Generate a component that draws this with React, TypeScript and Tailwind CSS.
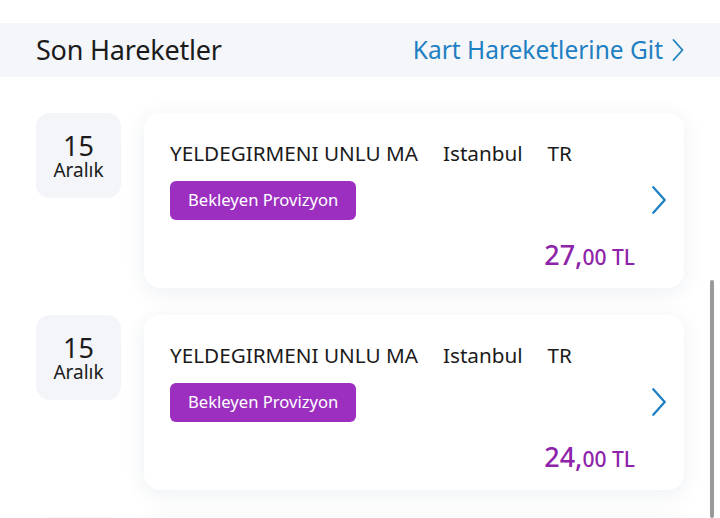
const TRANSACTIONS = [
  { day: "15", month: "Aralık", merchant: "YELDEGIRMENI UNLU MA", city: "Istanbul", country: "TR", whole: "27", cents: "00" },
  { day: "15", month: "Aralık", merchant: "YELDEGIRMENI UNLU MA", city: "Istanbul", country: "TR", whole: "24", cents: "00" },
  { day: "14", month: "Aralık", merchant: "YELDEGIRMENI UNLU MA", city: "Istanbul", country: "TR", whole: "18", cents: "50" },
];

const font = { fontFamily: '"Noto Sans", "Open Sans", sans-serif' };

// thin chevron used for links and row arrows
const Chevron = ({ className }: { className?: string }) => (
  <svg viewBox="0 0 12 22" fill="none" className={className}>
    <polyline points="1.5,1 10.5,11 1.5,21" stroke="currentColor" strokeWidth="1.8" strokeLinecap="round" strokeLinejoin="round" />
  </svg>
);

export default function App() {
  return (
    <div className="relative w-[720px] h-[518px] overflow-hidden bg-white text-[#1b1b1b]" style={font}>
      {/* Section header */}
      <div className="mt-[23px] h-[54px] bg-[#f4f6f9] flex items-center justify-between pl-[36px] pr-[36px]">
        <h2 className="text-[27px] tracking-[-0.2px]">Son Hareketler</h2>
        <button className="flex items-center gap-[9px] text-[24.5px] text-[#1e7fc2]">
          Kart Hareketlerine Git
          <Chevron className="w-[12px] h-[22px]" />
        </button>
      </div>

      {/* Transaction list */}
      <div className="flex flex-col gap-[27px] pt-[36px] pl-[36px] pr-[36px]">
        {TRANSACTIONS.map((t, i) => (
          <div key={i} className="flex gap-[23px] items-start">
            <div className="w-[85px] h-[85px] shrink-0 rounded-[14px] bg-[#f3f5f9] flex flex-col items-center justify-center pt-[5px]">
              <span className="text-[27px] leading-[25px]">{t.day}</span>
              <span className="text-[19px] leading-[25px]">{t.month}</span>
            </div>
            <div className="flex-1 h-[175px] rounded-[16px] bg-white shadow-[0_4px_22px_rgba(30,50,90,0.08)] flex items-center pl-[26px] pr-[17px]">
              <div className="flex-1 flex flex-col h-full pt-[27px]">
                <div className="flex gap-[25px] text-[20.7px] leading-[26px]">
                  <span>{t.merchant}</span>
                  <span>{t.city}</span>
                  <span>{t.country}</span>
                </div>
                <span className="mt-[15px] self-start h-[39px] px-[18px] rounded-[6px] bg-[#9c2fbf] text-white text-[16.6px] flex items-center">
                  Bekleyen Provizyon
                </span>
                <div className="mt-[15px] self-end pr-[16px] flex items-baseline text-[#8e24aa] font-medium">
                  <span className="text-[27px]">{t.whole},</span>
                  <span className="text-[21px]">{t.cents} TL</span>
                </div>
              </div>
              <Chevron className="w-[16px] h-[28px] text-[#1e7fc2] -mt-[2px]" />
            </div>
          </div>
        ))}
      </div>

      {/* Overlay scrollbar */}
      <div className="absolute right-[6px] top-[280px] w-[4px] h-[238px] rounded-full bg-[#9a9a9a]" />
    </div>
  );
}
